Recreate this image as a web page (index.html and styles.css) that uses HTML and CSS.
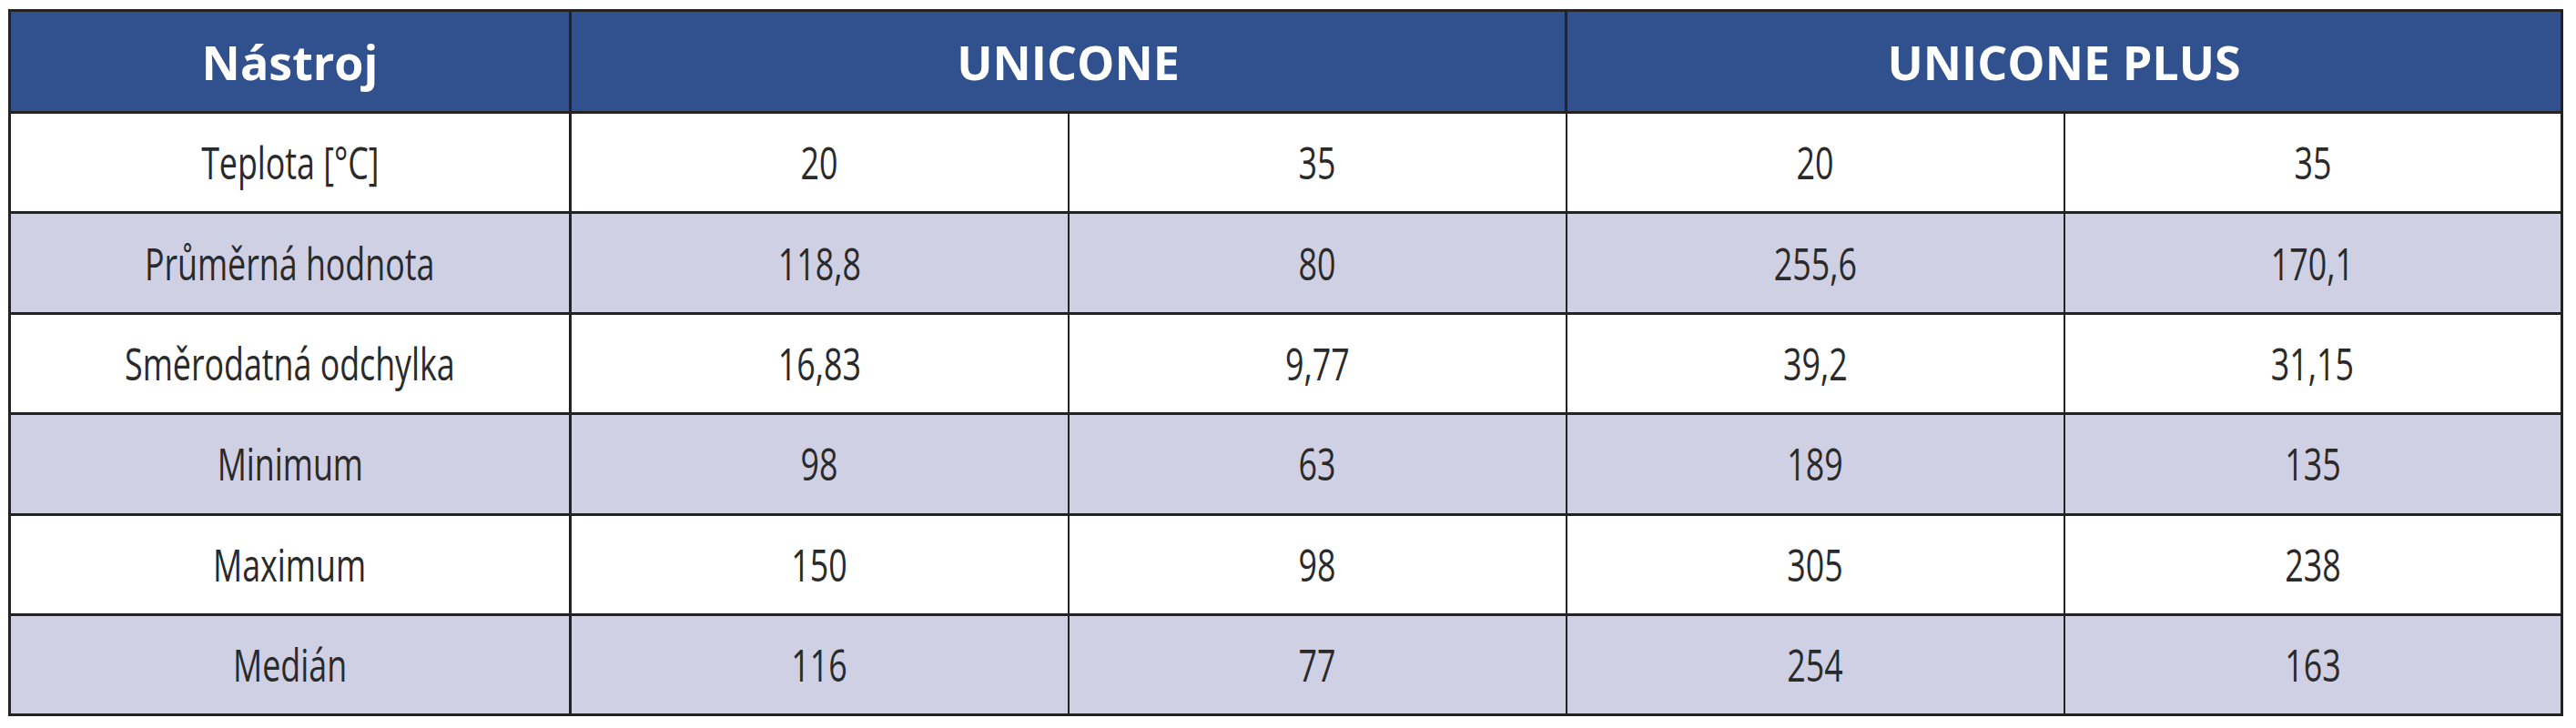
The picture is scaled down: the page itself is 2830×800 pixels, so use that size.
FILE: index.html
```html
<!DOCTYPE html>
<html lang="cs">
<head>
<meta charset="utf-8">
<title>Nástroj</title>
<link rel="stylesheet" href="styles.css">
</head>
<body>
<table class="data">
  <colgroup>
    <col class="c-label">
    <col class="c-val">
    <col class="c-val">
    <col class="c-val">
    <col class="c-val">
  </colgroup>
  <thead>
    <tr class="head">
      <th>Nástroj</th>
      <th colspan="2">UNICONE</th>
      <th colspan="2">UNICONE PLUS</th>
    </tr>
  </thead>
  <tbody>
    <tr class="row">
      <td><span class="t">Teplota [°C]</span></td>
      <td><span class="t">20</span></td>
      <td><span class="t">35</span></td>
      <td><span class="t">20</span></td>
      <td><span class="t">35</span></td>
    </tr>
    <tr class="row alt">
      <td><span class="t">Průměrná hodnota</span></td>
      <td><span class="t">118,8</span></td>
      <td><span class="t">80</span></td>
      <td><span class="t">255,6</span></td>
      <td><span class="t">170,1</span></td>
    </tr>
    <tr class="row">
      <td><span class="t">Směrodatná odchylka</span></td>
      <td><span class="t">16,83</span></td>
      <td><span class="t">9,77</span></td>
      <td><span class="t">39,2</span></td>
      <td><span class="t">31,15</span></td>
    </tr>
    <tr class="row alt">
      <td><span class="t">Minimum</span></td>
      <td><span class="t">98</span></td>
      <td><span class="t">63</span></td>
      <td><span class="t">189</span></td>
      <td><span class="t">135</span></td>
    </tr>
    <tr class="row">
      <td><span class="t">Maximum</span></td>
      <td><span class="t">150</span></td>
      <td><span class="t">98</span></td>
      <td><span class="t">305</span></td>
      <td><span class="t">238</span></td>
    </tr>
    <tr class="row alt">
      <td><span class="t">Medián</span></td>
      <td><span class="t">116</span></td>
      <td><span class="t">77</span></td>
      <td><span class="t">254</span></td>
      <td><span class="t">163</span></td>
    </tr>
  </tbody>
</table>
</body>
</html>
```
FILE: styles.css
```css
html, body {
  margin: 0;
  padding: 0;
  background: #ffffff;
}

body {
  padding: 10px 0 0 9px;
  font-family: "Open Sans", "Liberation Sans", sans-serif;
}

.data {
  border-collapse: collapse;
  table-layout: fixed;
  width: 2805px;
  border: 3px solid #232323;
}

.c-label { width: 616px; }
.c-val { width: 547px; }

.data th,
.data td {
  border: 3px solid #232323;
  text-align: center;
  vertical-align: middle;
  padding: 0;
  white-space: nowrap;
}

.head {
  height: 112px;
  background: #31518e;
}

.head th {
  color: #ffffff;
  font-weight: 700;
  font-size: 52px;
  line-height: 1;
}

.row {
  height: 110.4px;
  background: #ffffff;
}

.row.alt {
  background: #d0d0e5;
}

.row td {
  color: #2a2a2a;
  font-size: 49px;
  font-weight: 400;
  line-height: 1;
}

.row td:not(:first-child) {
  border-left-width: 2px;
  border-right-width: 2px;
}

.t {
  display: inline-block;
  transform: scaleX(0.73);
}
```
